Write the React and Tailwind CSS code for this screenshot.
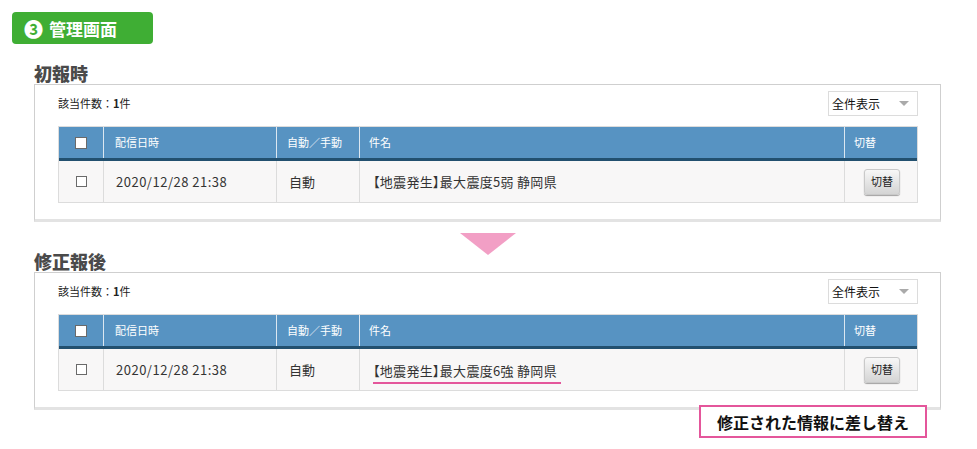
import React from 'react';

const FONT = { fontFamily: '"Noto Sans CJK JP", "Noto Sans", sans-serif' };

function Checkbox({ head }) {
  return (
    <span
      className={
        head
          ? 'inline-block w-[12px] h-[12px] bg-white border border-[#6a6a6a]'
          : 'inline-block w-[11px] h-[11px] bg-white border border-[#6a6a6a]'
      }
    />
  );
}

function Panel({ subject, marked }) {
  return (
    <div className="border border-[#cfcfcf] border-b-[3px] border-b-[#e3e3e3] bg-white pl-[23px] pr-[22px] pt-[6px] pb-[16px]">
      {/* count + filter */}
      <div className="flex items-center justify-between h-[25px]">
        <div className="text-[11px] text-[#222] leading-none">
          該当件数：<span className="font-bold">1</span>件
        </div>
        <div className="w-[90px] h-[25px] border border-[#dcdcdc] bg-white flex items-center justify-between pl-[3px] pr-[8px]">
          <span className="text-[12px] text-[#111] leading-none">全件表示</span>
          <span className="w-0 h-0 border-l-[5px] border-r-[5px] border-t-[5px] border-l-transparent border-r-transparent border-t-[#aaa]" />
        </div>
      </div>

      {/* table */}
      <div className="mt-[10px] border border-[#dcdcdc]">
        <div className="flex h-[34px] bg-[#5793c2] border-b-[3px] border-b-[#22506f] text-white text-[11px]">
          <div className="w-[45px] flex items-center justify-center border-r border-[#dbe7f1]">
            <Checkbox head />
          </div>
          <div className="w-[173px] flex items-center pl-[11px] border-r border-[#dbe7f1]">配信日時</div>
          <div className="w-[83px] flex items-center pl-[10px] border-r border-[#dbe7f1]">自動／手動</div>
          <div className="flex-1 flex items-center pl-[9px] border-r border-[#dbe7f1]">件名</div>
          <div className="w-[72px] flex items-center pl-[9px]">切替</div>
        </div>
        <div className="flex h-[41px] bg-[#f8f7f7] text-[13px] text-[#333]">
          <div className="w-[45px] flex items-center justify-center border-r border-[#dcdcdc]">
            <Checkbox />
          </div>
          <div className="w-[173px] flex items-center pl-[12px] border-r border-[#dcdcdc] tracking-[0.5px]">2020/12/28 21:38</div>
          <div className="w-[83px] flex items-center pl-[12px] border-r border-[#dcdcdc]">自動</div>
          <div className="flex-1 flex items-center pl-[13px] border-r border-[#dcdcdc] [font-feature-settings:'palt'] tracking-[0.3px]">
            {marked ? (
              <span className="inline-block border-b-2 border-[#e4569b] pt-[6px] pb-[2px] pr-[4px]">{subject}</span>
            ) : (
              <span>{subject}</span>
            )}
          </div>
          <div className="w-[72px] flex items-center justify-center">
            <button className="w-[36px] h-[26px] rounded-[3px] border border-[#c9c9c9] bg-gradient-to-b from-[#f7f7f7] to-[#d4d4d4] shadow-[0_1px_1px_rgba(0,0,0,0.35)] text-[11px] text-[#222] leading-none ml-[2px]">
              切替
            </button>
          </div>
        </div>
      </div>
    </div>
  );
}

export default function App() {
  return (
    <div className="w-[977px] h-[449px] bg-white pt-[12px]" style={FONT}>
      <div className="ml-[12px] w-[141px] h-[32px] rounded-[4px] bg-[#3fae34] flex items-center pl-[12px] gap-[6px] text-white font-bold text-[17px] leading-none">
        <span className="text-[19px]">❸</span>
        <span>管理画面</span>
      </div>

      <div className="ml-[34px] w-[907px]">
        <div className="h-[40px] flex items-end">
          <h2 className="text-[18px] font-black text-[#4a4a4a] leading-none mb-[2px]">初報時</h2>
        </div>
        <Panel subject="【地震発生】最大震度5弱 静岡県" />

        <div className="grid h-[50px]">
          <div className="[grid-area:1/1] self-start justify-self-center mt-[11px] w-0 h-0 border-l-[28px] border-r-[28px] border-t-[22px] border-l-transparent border-r-transparent border-t-[#f29fc5]" />
          <h2 className="[grid-area:1/1] self-end justify-self-start text-[18px] font-black text-[#4a4a4a] leading-none mb-[2px]">修正報後</h2>
        </div>
        <Panel subject="【地震発生】最大震度6強 静岡県" marked />

        <div className="flex justify-end -mt-[5px] pr-[14px]">
          <div className="w-[228px] h-[33px] border-2 border-[#e4569b] bg-white flex items-center justify-center text-[16px] font-bold text-[#111]">
            修正された情報に差し替え
          </div>
        </div>
      </div>
    </div>
  );
}
